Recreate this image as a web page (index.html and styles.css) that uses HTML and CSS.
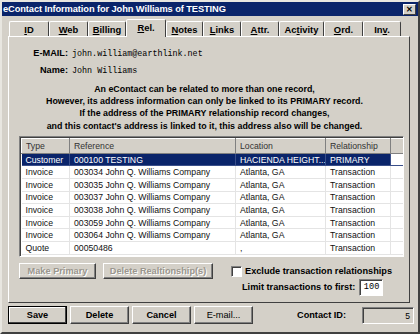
FILE: index.html
```html
<!DOCTYPE html>
<html lang="en">
<head>
    <meta charset="UTF-8">
    <title>eContact Information</title>
    <link rel="stylesheet" href="styles.css">
</head>
<body>
    <div class="window">
        <div class="titlebar">
            <span class="title">eContact Information for John Williams of TESTING</span>
            <span class="close-btn">&#x2715;</span>
        </div>

        <div class="tabs">
            <span class="tab"><u>I</u>D</span>
            <span class="tab"><u>W</u>eb</span>
            <span class="tab"><u>B</u>illing</span>
            <span class="tab active"><u>R</u>el.</span>
            <span class="tab"><u>N</u>otes</span>
            <span class="tab"><u>L</u>inks</span>
            <span class="tab"><u>A</u>ttr.</span>
            <span class="tab">Ac<u>t</u>ivity</span>
            <span class="tab"><u>O</u>rd.</span>
            <span class="tab">In<u>v</u>.</span>
        </div>

        <div class="panel">
            <div class="field">
                <span class="field-label">E-MAIL:</span>
                <span class="field-value">john.william@earthlink.net</span>
            </div>
            <div class="field">
                <span class="field-label">Name:</span>
                <span class="field-value">John Williams</span>
            </div>

            <p class="note">
                An eContact can be related to more than one record,<br>
                However, its address information can only be linked to its PRIMARY record.<br>
                If the address of the PRIMARY relationship record changes,<br>
                and this contact's address is linked to it, this address also will be changed.
            </p>

            <div class="grid-box">
                <table class="grid">
                    <thead>
                        <tr>
                            <th class="col-type">Type</th>
                            <th class="col-ref">Reference</th>
                            <th class="col-loc">Location</th>
                            <th class="col-rel">Relationship</th>
                            <th class="col-pad"></th>
                        </tr>
                    </thead>
                    <tbody>
                        <tr class="selected">
                            <td>Customer</td><td>000100 TESTING</td><td>HACIENDA HEIGHT...</td><td>PRIMARY</td><td class="blank"></td>
                        </tr>
                        <tr><td>Invoice</td><td>003034 John Q. Williams Company</td><td>Atlanta, GA</td><td>Transaction</td><td class="blank"></td></tr>
                        <tr><td>Invoice</td><td>003035 John Q. Williams Company</td><td>Atlanta, GA</td><td>Transaction</td><td class="blank"></td></tr>
                        <tr><td>Invoice</td><td>003037 John Q. Williams Company</td><td>Atlanta, GA</td><td>Transaction</td><td class="blank"></td></tr>
                        <tr><td>Invoice</td><td>003038 John Q. Williams Company</td><td>Atlanta, GA</td><td>Transaction</td><td class="blank"></td></tr>
                        <tr><td>Invoice</td><td>003059 John Q. Williams Company</td><td>Atlanta, GA</td><td>Transaction</td><td class="blank"></td></tr>
                        <tr><td>Invoice</td><td>003064 John Q. Williams Company</td><td>Atlanta, GA</td><td>Transaction</td><td class="blank"></td></tr>
                        <tr><td>Quote</td><td>00050486</td><td>,</td><td>Transaction</td><td class="blank"></td></tr>
                    </tbody>
                </table>
            </div>

            <div class="actions">
                <button class="btn disabled btn-primary">Make Primary</button>
                <button class="btn disabled btn-delrel">Delete Realtionship(s)</button>
                <div class="options">
                    <label class="check-row"><span class="checkbox"></span>Exclude transaction relationships</label>
                    <div class="limit-row">
                        <span>Limit transactions to first:</span>
                        <span class="textbox">100</span>
                    </div>
                </div>
            </div>
        </div>

        <div class="footer">
            <button class="btn default">Save</button>
            <button class="btn">Delete</button>
            <button class="btn">Cancel</button>
            <button class="btn light">E-mail...</button>
            <span class="contact-label">Contact ID:</span>
            <span class="textbox readonly">5</span>
        </div>
    </div>
</body>
</html>
```

FILE: styles.css
```css
:root {
    --face: #d4d0c8; --shadow: #808080; --dark: #404040;
    --hilite: #ffffff; --navy: #0a246a;
}
* { box-sizing: border-box; margin: 0; padding: 0; }
body { font-family: 'Liberation Sans', Arial, sans-serif; background: var(--face); }

.window {
    width: 420px; height: 334px; background: var(--face);
    border: 2px solid; border-color: #e8e6e0 var(--dark) var(--dark) #e8e6e0;
    display: flex; flex-direction: column;
}
.titlebar {
    height: 14px; background: var(--navy); color: #fff;
    display: flex; align-items: center; justify-content: space-between; padding: 0 2px 0 1px;
}
.title { font-weight: bold; font-size: 9.3px; letter-spacing: -0.1px; }
.close-btn {
    width: 13px; height: 11px; background: var(--face); color: #000;
    font-size: 8px; font-weight: bold; display: flex; align-items: center; justify-content: center;
    border: 1px solid; border-color: var(--hilite) var(--dark) var(--dark) var(--hilite);
}

.tabs { display: flex; align-items: flex-end; height: 20px; padding-left: 7px; }
.tab {
    height: 15px; font-weight: bold; font-size: 9.4px; padding: 2px 0 0 0; text-align: center;
    border: 1px solid; border-bottom: none; border-color: var(--hilite) var(--dark) transparent var(--hilite);
    border-radius: 2px 2px 0 0; position: relative;
}
.tab:nth-child(1) { width: 40px; }
.tab:nth-child(2) { width: 39px; }
.tab:nth-child(3) { width: 38px; }
.tab:nth-child(4) { width: 40px; }
.tab:nth-child(5) { width: 37px; }
.tab:nth-child(6) { width: 38px; }
.tab:nth-child(7) { width: 38px; }
.tab:nth-child(8) { width: 45px; }
.tab:nth-child(9) { width: 39px; }
.tab:nth-child(10) { width: 38px; }
.tab.active { height: 18px; margin-bottom: -1px; z-index: 1; background: var(--face); padding-top: 2px; }

.panel {
    margin: 0 8px 0 6px; height: 267px;
    border: 1px solid; border-color: var(--hilite) var(--dark) var(--dark) var(--hilite);
    padding: 11px 5px 0 10px;
}
.field { display: flex; align-items: baseline; height: 17px; }
.field-label { width: 53px; text-align: right; font-weight: bold; font-size: 9.2px; padding-right: 4px; }
.field-value { font-family: 'Liberation Mono', 'Courier New', monospace; font-size: 8.4px; }

.note {
    text-align: center; font-weight: bold; font-size: 8.85px; line-height: 12.2px;
    margin-top: 1px; padding-right: 14px;
}

.grid-box {
    margin-top: 4px; width: 385px; height: 121px; background: #fff;
    border: 1px solid; border-color: var(--shadow) var(--hilite) var(--hilite) var(--shadow);
    box-shadow: inset 1px 1px 0 var(--dark);
    overflow: hidden; padding: 1px 0 0 1px;
}
.grid { border-collapse: collapse; table-layout: fixed; width: 383px; font-size: 8.7px; }
.grid th {
    height: 15px; background: var(--face); font-weight: normal; text-align: left; color: #333;
    padding: 0 4px; border: 1px solid; border-color: var(--hilite) var(--shadow) var(--shadow) var(--hilite);
}
.col-type { width: 48px; }
.col-ref { width: 166px; }
.col-loc { width: 90px; }
.col-rel { width: 65px; }
.grid td {
    height: 12.6px; padding: 0 4px; white-space: nowrap; overflow: hidden;
    border-right: 1px solid #e4e4e4; border-bottom: 1px solid #e4e4e4; color: #111;
}
.grid td.blank { border-right: none; }
.grid tr.selected td { background: var(--navy); color: #fff; border-color: #3a4f8a; }
.grid tr.selected td.blank { background: #fff; }

.actions { display: flex; margin-top: 6px; }
.btn {
    font-family: 'Liberation Sans', Arial, sans-serif; font-weight: bold; font-size: 9.2px;
    background: var(--face); color: #000; height: 17px;
    border: 1px solid; border-color: var(--hilite) var(--dark) var(--dark) var(--hilite);
    box-shadow: inset -1px -1px 0 var(--shadow);
}
.btn.disabled { color: #9a968e; text-shadow: 1px 1px 0 #fff; height: 16px; }
.btn-primary { width: 77px; }
.btn-delrel { width: 110px; margin-left: 7px; }
.options { margin-left: 18px; font-weight: bold; font-size: 9.2px; }
.check-row { display: flex; align-items: center; gap: 3px; height: 13px; margin-top: 2px; }
.checkbox {
    width: 11px; height: 11px; background: #fff;
    border: 1px solid; border-color: var(--shadow) var(--hilite) var(--hilite) var(--shadow);
    box-shadow: inset 1px 1px 0 var(--dark);
}
.limit-row { display: flex; align-items: center; gap: 4px; margin-left: 11px; margin-top: 1px; }
.textbox {
    display: inline-block; background: #fff; font-weight: normal; font-size: 8.6px;
    text-align: right; padding: 2px 3px 0 0; font-family: 'Liberation Mono', 'Courier New', monospace;
    width: 24px; height: 17px;
    border: 1px solid; border-color: var(--shadow) var(--hilite) var(--hilite) var(--shadow);
    box-shadow: inset 1px 1px 0 var(--dark);
}

.footer { display: flex; align-items: center; padding: 3px 0 0 6px; gap: 3px; }
.footer .btn { width: 59px; height: 18px; }
.footer .btn.default { border: 1px solid #000; box-shadow: inset -1px -1px 0 var(--dark), inset 1px 1px 0 #fff; }
.footer .btn.light { font-weight: normal; }
.contact-label { font-weight: bold; font-size: 9.2px; margin-left: 41px; width: 62px; }
.textbox.readonly {
    background: var(--face); width: 52px; height: 17px; font-family: 'Liberation Sans', Arial, sans-serif;
    font-size: 8.6px; padding: 3px 3px 0 0;
}
```
